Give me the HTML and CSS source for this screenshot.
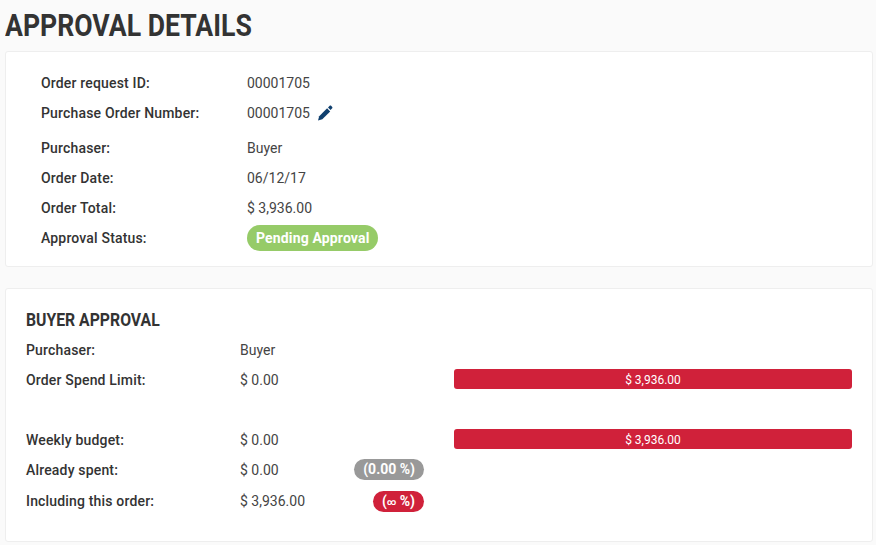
FILE: index.html
```html
<!DOCTYPE html>
<html lang="en">
<head>
    <meta charset="UTF-8">
    <title>Approval Details</title>
    <link rel="stylesheet" href="styles.css">
</head>
<body>

<div class="page">
    <h1 class="page-title"><span>APPROVAL DETAILS</span></h1>

    <div class="card order-card">
        <div class="row">
            <div class="label">Order request ID:</div>
            <div class="value">00001705</div>
        </div>
        <div class="row row-edit">
            <div class="label">Purchase Order Number:</div>
            <div class="value">00001705
                <svg class="edit-icon" viewBox="0 0 16 16" width="16" height="16">
                    <path d="M1 15.500l1.200-4.300 7.900-7.900 3.100 3.100-7.900 7.900z" fill="#0f3f6e"/>
                    <path d="M11 2.500l1.700-1.700c.4-.4 1-.4 1.400 0l1.100 1.100c.4.400.4 1 0 1.400l-1.700 1.700z" fill="#0f3f6e"/>
                </svg>
            </div>
        </div>
        <div class="row">
            <div class="label">Purchaser:</div>
            <div class="value">Buyer</div>
        </div>
        <div class="row">
            <div class="label">Order Date:</div>
            <div class="value">06/12/17</div>
        </div>
        <div class="row">
            <div class="label">Order Total:</div>
            <div class="value">$ 3,936.00</div>
        </div>
        <div class="row">
            <div class="label">Approval Status:</div>
            <div class="value"><span class="status">Pending Approval</span></div>
        </div>
    </div>

    <div class="card approval-card">
        <h2 class="card-title"><span>BUYER APPROVAL</span></h2>
        <div class="approval-grid">
            <div class="label">Purchaser:</div>
            <div class="value">Buyer</div>
            <div></div>
            <div></div>

            <div class="label">Order Spend Limit:</div>
            <div class="value">$ 0.00</div>
            <div></div>
            <div class="bar">$ 3,936.00</div>

            <div class="spacer"></div>

            <div class="label">Weekly budget:</div>
            <div class="value">$ 0.00</div>
            <div></div>
            <div class="bar">$ 3,936.00</div>

            <div class="label">Already spent:</div>
            <div class="value">$ 0.00</div>
            <div class="percent"><span class="pill pill-grey">(0.00 %)</span></div>
            <div></div>

            <div class="label">Including this order:</div>
            <div class="value">$ 3,936.00</div>
            <div class="percent"><span class="pill pill-red">(<span class="infinity">∞</span> %)</span></div>
            <div></div>
        </div>
    </div>
</div>

</body>
</html>
```

FILE: styles.css
```css
* {
    margin: 0;
    padding: 0;
    box-sizing: border-box;
}

body {
    font-family: 'Roboto', sans-serif;
    font-size: 14px;
    background-color: #fafafa;
    color: #333;
    overflow: hidden;
}

.page {
    padding: 0 3px 0 5px;
}

.page-title {
    height: 51px;
    font-size: 32px;
    line-height: 51px;
    font-weight: 700;
    color: #333;
    white-space: nowrap;
}

.page-title span {
    display: inline-block;
    transform: scaleX(0.832);
    transform-origin: left center;
}

.card-title span {
    display: inline-block;
    transform: scaleX(0.876);
    transform-origin: left center;
}

.card {
    background-color: #fff;
    border: 1px solid #eee;
    border-radius: 3px;
}

.order-card {
    height: 216px;
    padding: 16px 0 0 35px;
    margin-bottom: 21px;
}

.row {
    display: flex;
    align-items: center;
    height: 30px;
}

.row-edit {
    margin-bottom: 5px;
}

.row .label {
    width: 206px;
}

.label {
    font-weight: 500;
    letter-spacing: 0.17px;
    color: #333;
}

.value {
    display: flex;
    align-items: center;
    color: #444;
}

.edit-icon {
    margin-left: 7px;
    margin-top: -1px;
}

.status {
    display: inline-block;
    height: 26px;
    line-height: 26px;
    padding: 0 8px 0 9px;
    border-radius: 13px;
    background-color: #96cb68;
    color: #fff;
    font-weight: 700;
    letter-spacing: 0.15px;
}

.approval-card {
    height: 254px;
    padding: 16px 0 0 20px;
}

.card-title {
    height: 30px;
    font-size: 18px;
    line-height: 30px;
    font-weight: 700;
    color: #333;
    white-space: nowrap;
}

.approval-grid {
    display: grid;
    grid-template-columns: 214px 114px 70px 428px;
    grid-auto-rows: 30px;
    align-items: center;
}

.approval-grid > :nth-last-child(-n+4) {
    padding-top: 2px;
}

.spacer {
    grid-column: 1 / -1;
}

.bar {
    height: 20px;
    line-height: 23px;
    margin: 0 0 2px 30px;
    background-color: #d0213a;
    border-radius: 3px;
    color: #fff;
    font-size: 12px;
    text-align: center;
}

.percent {
    display: flex;
    justify-content: flex-end;
}

.pill {
    display: inline-block;
    height: 21px;
    line-height: 20px;
    padding: 0 9px;
    border-radius: 11px;
    color: #fff;
    font-weight: 700;
}

.pill-grey {
    background-color: #999;
    margin-bottom: 2px;
}

.pill-red {
    background-color: #d0213a;
}

.infinity {
    font-size: 9px;
    vertical-align: 1px;
}
```
